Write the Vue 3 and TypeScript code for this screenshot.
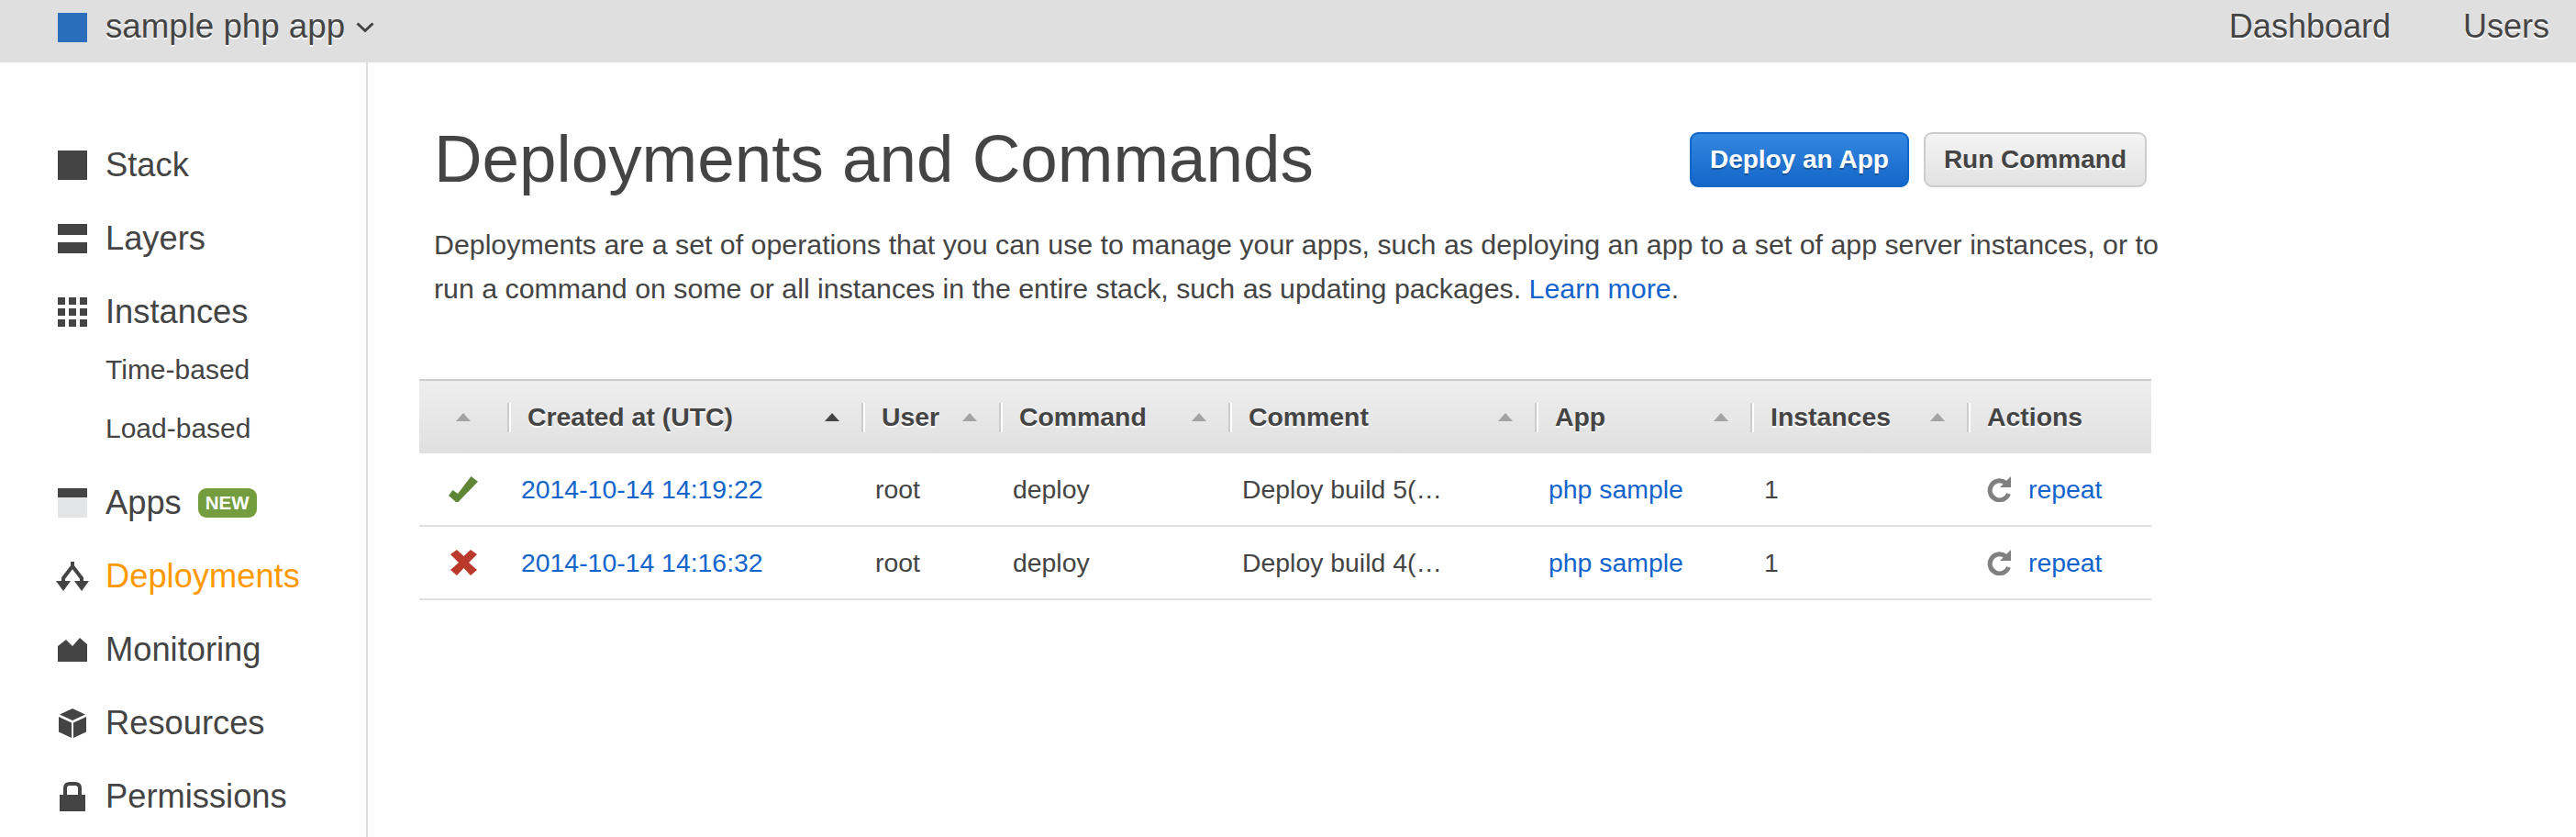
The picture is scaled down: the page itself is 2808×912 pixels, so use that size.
<template>
  <div class="app">
    <!-- top bar -->
    <header class="topbar">
      <div class="stack-name">
        <span class="stack-color"></span>
        <span class="stack-title">sample php app</span>
        <svg class="chevron" viewBox="0 0 20 12" width="20" height="12">
          <path d="M1.5 1.5 L10 9.5 L18.5 1.5" fill="none" stroke="#444" stroke-width="3" />
        </svg>
      </div>
      <nav class="top-nav">
        <a>Dashboard</a>
        <a>Users</a>
      </nav>
    </header>

    <div class="layout">
      <!-- left menu -->
      <aside class="sidebar">
        <ul class="menu">
          <li class="menu-item">
            <svg class="menu-icon" viewBox="0 0 32 32"><rect width="32" height="32" /></svg>
            <span>Stack</span>
          </li>
          <li class="menu-item">
            <svg class="menu-icon" viewBox="0 0 32 32"><rect width="32" height="12" /><rect y="20" width="32" height="12" /></svg>
            <span>Layers</span>
          </li>
          <li class="menu-item">
            <svg class="menu-icon" viewBox="0 0 32 32">
              <template v-for="y in [0, 12, 24]" :key="y">
                <rect v-for="x in [0, 12, 24]" :key="x" :x="x" :y="y" width="8" height="8" />
              </template>
            </svg>
            <span>Instances</span>
          </li>
          <li class="sub-menu">
            <div class="sub-item">Time-based</div>
            <div class="sub-item">Load-based</div>
          </li>
          <li class="menu-item">
            <svg class="menu-icon" viewBox="0 0 32 32"><rect width="32" height="10" /><rect y="10" width="32" height="22" fill="#e4e5e6" /></svg>
            <span>Apps</span>
            <span class="badge">NEW</span>
          </li>
          <li class="menu-item active">
            <svg class="menu-icon deploy-icon" viewBox="0 0 32 32">
              <path d="M16 0 V6 M16 5 L6 18 V24 M16 5 L26 18 V24" fill="none" stroke="#444" stroke-width="4" />
              <path d="M-2 21 H14 L6 32 Z M18 21 H34 L26 32 Z" />
            </svg>
            <span>Deployments</span>
          </li>
          <li class="menu-item">
            <svg class="menu-icon" viewBox="0 0 32 32"><path d="M0 12 L9 5 L16 12 L24 3 L32 10 V29 H0 Z" /></svg>
            <span>Monitoring</span>
          </li>
          <li class="menu-item">
            <svg class="menu-icon" viewBox="0 0 32 32">
              <path d="M16 0 L30 6.5 L16 13 L2 6.5 Z M1 9 L15 15.5 V32 L1 25.5 Z M31 9 L17 15.5 V32 L31 25.5 Z" />
            </svg>
            <span>Resources</span>
          </li>
          <li class="menu-item">
            <svg class="menu-icon" viewBox="0 0 32 32">
              <rect x="2" y="14" width="28" height="18" />
              <path d="M8 16 V7 Q8 2 13 2 H19 Q24 2 24 7 V16" fill="none" stroke="#444" stroke-width="4" />
            </svg>
            <span>Permissions</span>
          </li>
        </ul>
      </aside>

      <!-- right content -->
      <main class="content">
        <div class="page-head">
          <h1>Deployments and Commands</h1>
          <div class="actions">
            <button class="btn btn-primary">Deploy an App</button>
            <button class="btn">Run Command</button>
          </div>
        </div>
        <p class="intro">
          Deployments are a set of operations that you can use to manage your apps, such as deploying an app to a set of app server instances, or to
          run a command on some or all instances in the entire stack, such as updating packages. <a class="link">Learn more</a>.
        </p>

        <div class="table">
          <div class="row head">
            <div v-for="col in columns" :key="col.name" class="th">
              <span v-if="col.name" class="th-label">{{ col.name }}</span>
              <span v-if="col.sort" class="sort" :class="{ current: col.current }"></span>
            </div>
          </div>
          <div v-for="d in deployments" :key="d.time" class="row body-row">
            <div class="td status">
              <svg v-if="d.ok" viewBox="0 0 32 28" width="32" height="28">
                <path d="M0 21 L4.500 15 L10 19 L24.500 0 L32 5.700 L10.500 28 L8 28 Z" fill="#5f8537" />
              </svg>
              <svg v-else viewBox="0 0 29 28" width="29" height="28">
                <path d="M0 5 L7 0 L14.500 7 L22 0 L29 5 L20 14 L29 22 L22 28 L14.500 20 L7 28 L0 22 L9 14 Z" fill="#b93a2b" />
              </svg>
            </div>
            <div class="td"><a class="link">{{ d.time }}</a></div>
            <div class="td">{{ d.user }}</div>
            <div class="td">{{ d.command }}</div>
            <div class="td">{{ d.comment }}</div>
            <div class="td"><a class="link">{{ d.app }}</a></div>
            <div class="td">{{ d.instances }}</div>
            <div class="td repeat">
              <svg viewBox="0 0 28 28" width="28" height="28">
                <path d="M20 7 A10.500 10.500 0 1 0 23.500 19" fill="none" stroke="#808080" stroke-width="5" />
                <path d="M26 0 V12 H14 Z" fill="#808080" />
              </svg>
              <a class="link">repeat</a>
            </div>
          </div>
        </div>
      </main>
    </div>
  </div>
</template>

<script setup lang="ts">
const columns = [
  { name: '', sort: true },
  { name: 'Created at (UTC)', sort: true, current: true },
  { name: 'User', sort: true },
  { name: 'Command', sort: true },
  { name: 'Comment', sort: true },
  { name: 'App', sort: true },
  { name: 'Instances', sort: true },
  { name: 'Actions', sort: false }
]

const deployments = [
  { ok: true, time: '2014-10-14 14:19:22', user: 'root', command: 'deploy', comment: 'Deploy build 5(…', app: 'php sample', instances: 1 },
  { ok: false, time: '2014-10-14 14:16:32', user: 'root', command: 'deploy', comment: 'Deploy build 4(…', app: 'php sample', instances: 1 }
]
</script>

<style>
html,
body {
  margin: 0;
  background: #fff;
}
</style>

<style scoped>
.app {
  height: 912px;
  overflow: hidden;
  display: flex;
  flex-direction: column;
  font-family: "Liberation Sans", Arial, sans-serif;
  color: #444;
}

.topbar {
  height: 68px;
  flex: none;
  background: #dfdfdf;
  display: flex;
  align-items: center;
  justify-content: space-between;
  padding: 0 29px 0 63px;
  font-size: 36px;
  text-shadow: 0 2px 0 #fff;
}

.stack-name {
  display: flex;
  align-items: center;
  margin-top: -8px;
}

.stack-color {
  width: 32px;
  height: 32px;
  background: #2a6ebb;
  margin-right: 20px;
}

.stack-title {
  font-size: 36.700px;
  margin-top: -3px;
}

.chevron {
  margin-left: 12px;
}

.top-nav {
  display: flex;
  gap: 79px;
  margin-top: -10px;
}

.layout {
  flex: 1;
  display: flex;
  min-height: 0;
}

.sidebar {
  width: 401px;
  flex: none;
  border-right: 2px solid #dfdfdf;
  padding: 72px 0 0 63px;
  box-sizing: border-box;
}

.menu {
  list-style: none;
  margin: 0;
  padding: 0;
  font-size: 36.300px;
}

.menu-item {
  height: 80px;
  display: flex;
  align-items: center;
}

.menu-item span:first-of-type {
  margin-top: -1px;
}

.menu-item.active {
  color: #f90;
}

.menu-icon {
  width: 32px;
  height: 32px;
  margin-right: 20px;
  fill: #444;
  flex: none;
}

.deploy-icon {
  overflow: visible;
}

.sub-menu {
  margin: -9px 0 9px;
  padding-left: 52px;
  font-size: 30px;
}

.sub-item {
  height: 64px;
  line-height: 64px;
}

.badge {
  width: 64px;
  height: 32px;
  margin-left: 18px;
  border-radius: 9px;
  background: #749d3f;
  color: #fff;
  font-size: 20.500px;
  font-weight: bold;
  line-height: 32px;
  text-align: center;
}

.content {
  flex: 1;
  padding: 65px 0 0 55px;
}

.page-head {
  width: 1884px;
  height: 80px;
  padding-left: 17px;
  box-sizing: border-box;
  display: flex;
  align-items: center;
  justify-content: space-between;
}

h1 {
  margin: 0;
  font-size: 72.800px;
  font-weight: normal;
  line-height: 80px;
}

.actions {
  display: flex;
  gap: 16px;
  margin-top: 2px;
}

.btn {
  height: 60px;
  padding: 0 20px;
  border: 2px solid #ccc;
  border-radius: 9px;
  background: linear-gradient(#f4f4f4, #e2e2e2);
  color: #444;
  font-family: inherit;
  font-size: 28px;
  font-weight: bold;
  text-shadow: 0 2px 0 #fff;
}

.btn-primary {
  border-color: #1166c8;
  background: linear-gradient(#3388e0, #1566c9);
  color: #fff;
  text-shadow: 0 2px 0 rgba(0, 0, 0, 0.25);
}

.intro {
  width: 1895px;
  margin: 30px 0 0 17px;
  font-size: 30.330px;
  line-height: 48px;
}

.link {
  color: #1264cc;
}

.table {
  width: 1888px;
  margin-top: 74px;
  margin-left: 1px;
  font-size: 28.400px;
}

.row {
  display: grid;
  grid-template-columns: 96px 386px 150px 250px 334px 235px 236px 201px;
}

.head {
  height: 81px;
  box-sizing: border-box;
  border-top: 2px solid #ccc;
  background: linear-gradient(#eee, #e0e0e0);
  align-items: center;
}

.th {
  height: 32px;
  display: flex;
  align-items: center;
  justify-content: space-between;
  padding: 0 24px 0 20px;
  font-weight: bold;
  text-shadow: 0 2px 0 #fff;
  box-sizing: border-box;
}

.th:first-child {
  justify-content: center;
  padding: 0;
}

.th:not(:first-child) {
  border-left: 2px solid #ccc;
  box-shadow: inset 2px 0 0 #fff;
}

.sort {
  width: 0;
  height: 0;
  border-left: 8px solid transparent;
  border-right: 8px solid transparent;
  border-bottom: 9px solid #a3a3a3;
}

.sort.current {
  border-bottom-color: #444;
}

.body-row {
  height: 80px;
  box-sizing: border-box;
  border-bottom: 2px solid #e0e0e0;
  align-items: center;
}

.td {
  padding-left: 15px;
}

.status {
  padding-left: 0;
  display: flex;
  justify-content: center;
}

.repeat {
  display: flex;
  align-items: center;
  gap: 17px;
  padding-left: 22px;
}
</style>
